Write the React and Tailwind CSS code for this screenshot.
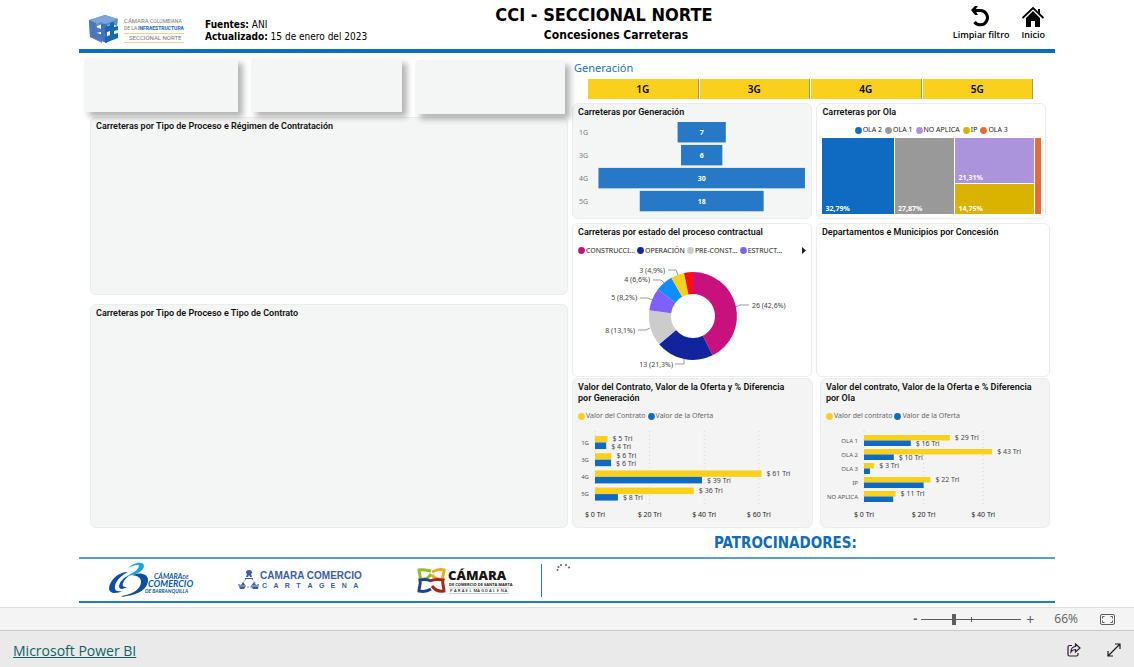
import React, { useState } from 'react';

const funnel = [
  { label: '1G', value: 7 },
  { label: '3G', value: 6 },
  { label: '4G', value: 30 },
  { label: '5G', value: 18 },
];

const states = [
  { value: 26, color: '#c9117d', label: '26 (42,6%)', x: 179, y: 64, anchor: 'start', line: '163,62 167,60 176,60' },
  { value: 13, color: '#12239e', label: '13 (21,3%)', x: 100, y: 123, anchor: 'end', line: '111,114 111,119 102,119' },
  { value: 8, color: '#cccccc', label: '8 (13,1%)', x: 62, y: 89, anchor: 'end', line: '77,83 73,85 65,85' },
  { value: 5, color: '#8061f8', label: '5 (8,2%)', x: 64, y: 56, anchor: 'end', line: '79,55 75,53 67,53' },
  { value: 4, color: '#118dff', label: '4 (6,6%)', x: 77, y: 38, anchor: 'end', line: '91,38 88,35 80,35' },
  { value: 3, color: '#f9d11c', label: '3 (4,9%)', x: 92, y: 29, anchor: 'end', line: '105,30 103,25 95,25' },
  { value: 2, color: '#ff0f14' },
];

const byGeneration = [
  { label: '1G', contrato: 4.6, oferta: 4.1, text: ['$ 5 Tri', '$ 4 Tri'] },
  { label: '3G', contrato: 6, oferta: 5.9, text: ['$ 6 Tri', '$ 6 Tri'] },
  { label: '4G', contrato: 61, oferta: 39.2, text: ['$ 61 Tri', '$ 39 Tri'] },
  { label: '5G', contrato: 36.2, oferta: 8.4, text: ['$ 36 Tri', '$ 8 Tri'] },
];

const byOla = [
  { label: 'OLA 1', contrato: 28.8, oferta: 15.7, text: ['$ 29 Tri', '$ 16 Tri'] },
  { label: 'OLA 2', contrato: 43, oferta: 10, text: ['$ 43 Tri', '$ 10 Tri'] },
  { label: 'OLA 3', contrato: 3.4, oferta: 2, text: ['$ 3 Tri', ''] },
  { label: 'IP', contrato: 22.3, oferta: 20, text: ['$ 22 Tri', ''] },
  { label: 'NO APLICA', contrato: 10.6, oferta: 9.8, text: ['$ 11 Tri', ''] },
];

function Card({ title, className = '', children }) {
  return (
    <section className={`min-w-0 overflow-hidden rounded-md border border-[#ebedec] ${className}`}>
      <h2 className="-mb-px pt-[3px] pr-4 pl-[5px] font-['Roboto','Noto_Sans',sans-serif] text-[9px] leading-[11px] font-semibold text-[#111]">{title}</h2>
      {children}
    </section>
  );
}

function Legend({ items, className = '' }) {
  return (
    <ul className={`flex items-center text-[7px] leading-[10px] whitespace-nowrap ${className}`}>
      {items.map(([color, text]) => (
        <li key={text} className="flex items-center gap-px">
          <svg className="size-[7px] shrink-0" viewBox="0 0 7 7"><circle cx="3.5" cy="3.5" r="3.4" fill={color} /></svg>
          {text}
        </li>
      ))}
    </ul>
  );
}

function FunnelChart() {
  return (
    <svg className="block h-[96px] w-full" viewBox="0 0 239 96" preserveAspectRatio="xMinYMin" fontSize="7">
      {funnel.map((d, i) => {
        const width = d.value * 6.9;
        const y = 5 + i * 23;
        return (
          <g key={d.label}>
            <text x="6" y={y + 13} fill="#777">{d.label}</text>
            <rect x={129 - width / 2} y={y} width={width} height="20.5" fill="#2779c7" />
            <text x="129" y={y + 13} fill="#fff" fontWeight="700" textAnchor="middle">{d.value}</text>
          </g>
        );
      })}
    </svg>
  );
}

function Treemap() {
  return (
    <div className="mr-1 ml-[5px] mt-[3px] grid h-[76px] grid-cols-[71fr_59fr_78fr_6fr] grid-rows-[44fr_30fr] gap-px text-[7px] leading-[10px] font-bold text-white">
      <div className="row-span-2 flex items-end bg-[#0f6bc1] px-[3px]">32,79%</div>
      <div className="row-span-2 flex items-end bg-[#999999] px-[3px]">27,87%</div>
      <div className="flex items-end bg-[#ac94dc] px-[3px]">21,31%</div>
      <div className="col-start-4 row-span-2 row-start-1 bg-[#e66c37]" />
      <div className="col-start-3 row-start-2 flex items-end bg-[#d9b300] px-[3px]">14,75%</div>
    </div>
  );
}

function slicePath(from, to, cx, cy, outer, inner) {
  const point = (t, r) => `${cx + r * Math.sin(t * 2 * Math.PI)} ${cy - r * Math.cos(t * 2 * Math.PI)}`;
  return `M${point(from, outer)} A${outer} ${outer} 0 0 1 ${point(to, outer)} L${point(to, inner)} A${inner} ${inner} 0 0 0 ${point(from, inner)}Z`;
}

function DonutChart() {
  const total = states.reduce((sum, s) => sum + s.value, 0);
  let start = 0;
  return (
    <svg className="block h-[116px] w-full" viewBox="0 11 238 116" preserveAspectRatio="xMinYMin" fontSize="7">
      {states.map((s) => {
        const from = start;
        start += s.value / total;
        return (
          <g key={s.color}>
            <path d={slicePath(from, start, 120, 71, 44, 22)} fill={s.color} />
            {s.label && <polyline points={s.line} fill="none" stroke="#999" />}
            {s.label && <text x={s.x} y={s.y - 1} textAnchor={s.anchor} fill="#444">{s.label}</text>}
          </g>
        );
      })}
    </svg>
  );
}

function BarChart({ data, x0, scale, top, pitch, bar, ticks }) {
  return (
    <svg className="block h-[104px] w-full" viewBox="0 0 227 104" preserveAspectRatio="xMinYMin" fontSize="7">
      {ticks.map((t) => (
        <g key={t}>
          <line x1={x0 + t * scale} x2={x0 + t * scale} y1="10" y2="86" stroke="#d4d4d4" strokeDasharray="1 3" />
          <text x={x0 + t * scale} y="96" textAnchor="middle" fill="#222">{`$ ${t} Tri`}</text>
        </g>
      ))}
      {data.map((d, i) => {
        const y = top + i * pitch;
        return (
          <g key={d.label} fill="#444">
            <text x={x0 - 6} y={y + bar + 2} fontSize="6" textAnchor="end" fill="#555">{d.label}</text>
            <rect x={x0} y={y} width={d.contrato * scale} height={bar} fill="#f9d11c" />
            <rect x={x0} y={y + bar} width={d.oferta * scale} height={bar} fill="#0f6bc1" />
            <text x={x0 + d.contrato * scale + 5} y={y + bar / 2 + 2}>{d.text[0]}</text>
            {d.text[1] && <text x={x0 + d.oferta * scale + 5} y={y + bar * 1.5 + 3}>{d.text[1]}</text>}
          </g>
        );
      })}
    </svg>
  );
}

function CciLogo() {
  return (
    <div className="flex items-center gap-1">
      <svg className="h-7 w-[30px]" viewBox="0 0 30 28">
        <path d="M0 5 16 0l13 4-1 7-6-2-4 2-5-2-5 2v7l5 2v8L1 22z" fill="#5b8bc9" />
        <path d="M0 5 16 0l13 4-13 5-4-2-5 2z" fill="#7ea5d8" />
        <path d="M0 5l7 3v4l5 2v3l-5 1 8 2v7L1 22z" fill="#4a78bb" />
        <path d="M12 9h6v19l-3-1-3-6z" fill="#3f73ba" />
        <path d="M16 12l5-2V8l4-1v5l4-1v4l-4 1v3l4-1v5l-13 5v-6l5-2v-4l-5 2z" fill="#1769ae" />
      </svg>
      <svg className="h-[27px] w-[62px]" viewBox="0 0 62 27" fontFamily="Roboto, sans-serif" fontSize="5" fill="#777">
        <text x="1" y="7" fontSize="6">CÁMARA</text>
        <text x="27" y="7">COLOMBIANA</text>
        <text x="1" y="14">DE LA</text>
        <text x="15" y="14" fill="#1769ae" fontWeight="700">INFRAESTRUCTURA</text>
        <text x="6" y="24" fontSize="6">SECCIONAL NORTE</text>
        <path d="M1 17.5h60M1 26.5h60" stroke="#f3cf94" />
      </svg>
    </div>
  );
}

function BarranquillaLogo() {
  return (
    <svg className="h-9 w-[90px]" viewBox="0 0 90 36" fontFamily="Lato, sans-serif" fontStyle="italic" fontWeight="700">
      <path d="M20 10C10 10 2 18 1 26c0 6 7 6 14 3-5 1-9 0-8-5 1-6 7-11 13-14z" fill="#0b4ea2" />
      <path d="M22 13c-6 2-11 7-11 12 1 3 5 2 8 0-4 0-5-1-4-4 1-3 4-6 7-8z" fill="#0b4ea2" />
      <path d="M24 13c7-3 16-2 16 5 0 9-10 15-22 16-1 1-4 1-5 0 9-1 20-6 20-14 0-5-4-6-9-7z" fill="#0b4ea2" />
      <path d="M20 6c5-5 15-8 16-2 0 5-8 9-17 10 6-3 11-6 12-10 0-2-5-1-11 2z" fill="#16a5df" />
      <g fill="#0b55a5">
        <text x="46" y="17" fontSize="7">CÁMARA<tspan fontSize="5">DE</tspan></text>
        <text x="40" y="25" fontSize="9">COMERCIO</text>
        <text x="37" y="31" fontSize="5">DE BARRANQUILLA</text>
      </g>
    </svg>
  );
}

function CartagenaLogo() {
  return (
    <svg className="h-5 w-[128px]" viewBox="0 0 128 20" fill="#3d5da3" fontFamily="Liberation Sans, sans-serif">
      <path d="M11 0c2 0 3 1 3 3l-1 1 1 3h-2l-1-2-1 2H8l1-3-1-1c0-2 1-3 3-3zM7 8h8v1H7z" />
      <path d="M8 9 4 14M14 9l4 5M9 17h5" stroke="#3d5da3" strokeWidth="0.7" strokeDasharray="2 1" />
      <path d="M0 14l3 1 2-3 3 4-2 3H2zM21 14l-3 1-2-3-3 4 2 3h5z" />
      <path d="M1 16h7M14 16h7" stroke="#fff" strokeWidth="0.6" />
      <text x="22" y="9" fontSize="10" fontWeight="700">CÁMARA COMERCIO</text>
      {'CARTAGENA'.split('').map((letter, i) => (
        <text key={i} x={24 + i * 11.4} y="18" fontSize="7" fontWeight="700">{letter}</text>
      ))}
    </svg>
  );
}

function SantaMartaLogo() {
  return (
    <svg className="h-7 w-[98px]" viewBox="0 0 98 28" fontFamily="Open Sans, sans-serif" fontWeight="800" fill="#161616">
      <g fill="none" strokeWidth="3">
        <path d="M14 5C9 4 6 3 2 4c0 4 2 6 1 9 5 1 8 0 11-5" stroke="#8fbf21" />
        <path d="M15 6c4-2 8-3 12-2 0 4-2 6-1 9-4 1-8 0-11-4" stroke="#f4a81c" />
        <path d="M14 15c-4-2-7-2-11-1 1 4-1 7-1 11 5 1 9 0 12-2" stroke="#27408b" />
        <path d="M13 15c4-2 8-2 13-1-1 4 1 7 1 11-5 1-9-1-12-5" stroke="#9e2b20" />
      </g>
      <text x="31" y="14" fontSize="13">CÁMARA</text>
      <text x="32" y="20" fontSize="4" fontWeight="700">DE COMERCIO DE SANTA MARTA</text>
      <path d="M32 22h60M32 27.500h60" stroke="#999" strokeWidth="0.5" />
      {'PARAELMAGDALENA'.split('').map((letter, i) => (
        <text key={i} x={33 + i * 3.9} y="26" fontSize="4" fontWeight="600">{letter}</text>
      ))}
    </svg>
  );
}

export default function App() {
  const [zoom, setZoom] = useState(66);

  return (
    <div className="bg-white font-['Noto_Sans','Open_Sans',sans-serif] text-[#252423]">
      <main className="px-[79px]">
        <header className="flex h-[53px] items-start border-b-4 border-[#0a6ebd] font-['DejaVu_Sans_Condensed','DejaVu_Sans',sans-serif] text-black">
          <div className="pt-[15px] pl-[10px]"><CciLogo /></div>
          <p className="ml-5 pt-[19px] text-[10px] leading-[12px]">
            <b>Fuentes:</b> ANI<br />
            <b>Actualizado:</b> 15 de enero del 2023
          </p>
          <div className="flex-1 pt-1 pr-[112px] text-center font-bold">
            <h1 className="text-[18px] leading-[22px]">CCI - SECCIONAL NORTE</h1>
            <p className="pl-6 text-[12px] leading-[18px]">Concesiones Carreteras</p>
          </div>
          <div className="flex gap-3 pt-[6px] pr-[10px] font-['Open_Sans',sans-serif] text-[9px] leading-[12px] font-semibold">
            <button className="flex flex-col items-center gap-[1px]">
              <svg className="size-[22px]" viewBox="0 0 22 22">
                <path d="M3 4.500h8a7.200 7.200 0 1 1-6.500 11.500" fill="none" stroke="#000" strokeWidth="3" />
                <path d="M1 4 5 0h3L5 4l3 5H5z" />
              </svg>
              Limpiar filtro
            </button>
            <button className="flex flex-col items-center gap-[1px]">
              <svg className="size-[22px]" viewBox="0 0 22 22">
                <path d="M0.500 12 11 2l10.500 10" fill="none" stroke="#000" strokeWidth="1.800" />
                <path d="M4 12l7-7 7 7v9h-5v-6H9v6H4zM16 3h2v5l-2-2z" />
              </svg>
              Inicio
            </button>
          </div>
        </header>

        <div className="grid grid-cols-[493fr_483fr]">
          <div className="flex flex-col pr-1">
            <div className="z-10 flex h-[64px] gap-[13px] pt-[5px] pr-[3px] pl-[5px]">
              <div className="h-[54px] flex-[154] rounded-tl bg-[#f4f6f5] shadow-[5px_5px_6px_rgba(0,0,0,0.3)]" />
              <div className="h-[54px] flex-[150] rounded-tl bg-[#f4f6f5] shadow-[5px_5px_6px_rgba(0,0,0,0.3)]" />
              <div className="mt-[2px] h-[54px] flex-[150] rounded-tl bg-[#f4f6f5] shadow-[5px_5px_6px_rgba(0,0,0,0.3)]" />
            </div>
            <Card title="Carreteras por Tipo de Proceso e Régimen de Contratación" className="ml-[11px] h-[178px] bg-[#f4f6f5]" />
            <Card title="Carreteras por Tipo de Proceso e Tipo de Contrato" className="mt-[9px] ml-[11px] flex-1 bg-[#f4f6f5]" />
          </div>

          <div className="flex flex-col pr-[5px]">
            <div className="h-[50px] pt-[7px] pr-[17px] pl-[2px]">
              <h2 className="text-[11px] leading-[16px] text-[#2275c4]">Generación</h2>
              <div className="mt-[3px] ml-[14px] flex gap-px">
                {['1G', '3G', '4G', '5G'].map((g) => (
                  <button key={g} className="h-5 flex-1 border-r border-[#a39b6e] bg-[#f9d11c] text-[10px] font-semibold text-black">{g}</button>
                ))}
              </div>
            </div>

            <div className="flex h-[116px] gap-1">
              <Card title="Carreteras por Generación" className="flex-[241] bg-[#f4f6f5]"><FunnelChart /></Card>
              <Card title="Carreteras por Ola" className="mr-1 flex-[230] bg-white">
                <Legend
                  className="mt-2 justify-center gap-[3px]"
                  items={[['#0f6bc1', 'OLA 2'], ['#999999', 'OLA 1'], ['#ac94dc', 'NO APLICA'], ['#d9b300', 'IP'], ['#e66c37', 'OLA 3']]}
                />
                <Treemap />
              </Card>
            </div>

            <div className="mt-1 flex h-[154px] gap-1">
              <Card title="Carreteras por estado del proceso contractual" className="flex-[240] bg-white">
                <div className="mt-2 flex h-[11px] items-center justify-between pr-[5px] pl-[5px]">
                  <Legend
                    className="gap-[2px]"
                    items={[['#c9117d', 'CONSTRUCCI...'], ['#12239e', 'OPERACIÓN'], ['#cccccc', 'PRE-CONST...'], ['#8061f8', 'ESTRUCT...']]}
                  />
                  <button aria-label="Siguiente"><svg className="h-[7px] w-1" viewBox="0 0 4 7"><path d="M0 0l4 3.5L0 7z" fill="#222" /></svg></button>
                </div>
                <DonutChart />
              </Card>
              <Card title="Departamentos e Municipios por Concesión" className="flex-[234] bg-white" />
            </div>

            <div className="mt-px flex h-[150px] gap-[7px]">
              <Card title="Valor del Contrato, Valor de la Oferta y % Diferencia por Generación" className="flex-[241] bg-[#f4f4f4]">
                <Legend className="mt-2 gap-[2px] pl-[5px] text-[#666]" items={[['#f9d11c', 'Valor del Contrato'], ['#0f6bc1', 'Valor de la Oferta']]} />
                <BarChart data={byGeneration} x0={22} scale={2.73} top={15} pitch={17.2} bar={6.5} ticks={[0, 20, 40, 60]} />
              </Card>
              <Card title="Valor del contrato, Valor de la Oferta e % Diferencia por Ola" className="flex-[230] bg-[#f4f4f4]">
                <Legend className="mt-2 gap-[2px] pl-[5px] text-[#666]" items={[['#f9d11c', 'Valor del contrato'], ['#0f6bc1', 'Valor de la Oferta']]} />
                <BarChart data={byOla} x0={43} scale={2.98} top={14} pitch={14} bar={5.5} ticks={[0, 20, 40]} />
              </Card>
            </div>
          </div>
        </div>

        <h2 className="pt-[6px] pl-[635px] font-['DejaVu_Sans_Condensed','DejaVu_Sans',sans-serif] text-[15px] leading-[18px] font-bold whitespace-nowrap text-[#0f6cb6]">PATROCINADORES:</h2>
        <div className="mt-[5px] flex h-[46px] items-center border-t-2 border-b-2 border-t-[#5b9bd5] border-b-[#1f7bc9] pl-[29px]">
          <BarranquillaLogo />
          <div className="ml-10"><CartagenaLogo /></div>
          <div className="ml-[51px]"><SantaMartaLogo /></div>
          <div className="ml-[26px] h-[33px] w-px bg-[#1f7bc9]" />
          <svg className="mt-1 ml-[14px] h-2 w-[15px] self-start" viewBox="0 0 15 8" fill="#666">
            <circle cx="1.5" cy="7" r="1" /><circle cx="2.5" cy="4" r="1.1" /><circle cx="5" cy="2" r="1.1" />
            <circle cx="10" cy="2" r="1.1" /><circle cx="13" cy="4.5" r="1.1" />
          </svg>
        </div>
      </main>

      <div className="mt-1 flex h-6 items-center justify-end border-t border-b border-t-[#e0e0e0] border-b-[#c8c8c8] bg-[#f4f4f4] pr-[19px] text-[#605e5c]">
        <button aria-label="Alejar" className="mr-1 text-[13px] font-bold" onClick={() => setZoom(Math.max(10, zoom - 10))}>-</button>
        <div className="relative flex items-center">
          <input
            type="range"
            aria-label="Zoom"
            min="0"
            max="206"
            value={zoom}
            onChange={(e) => setZoom(Number(e.target.value))}
            className="h-[11px] w-[100px] appearance-none bg-transparent bg-[linear-gradient(#605e5c,#605e5c)] bg-size-[100%_1px] bg-center bg-no-repeat [&::-webkit-slider-thumb]:h-[11px] [&::-webkit-slider-thumb]:w-1 [&::-webkit-slider-thumb]:appearance-none [&::-webkit-slider-thumb]:bg-[#605e5c]"
          />
          <span className="pointer-events-none absolute left-1/2 h-[5px] w-px bg-[#605e5c]" />
        </div>
        <button aria-label="Acercar" className="ml-[5px] text-[14px]" onClick={() => setZoom(Math.min(206, zoom + 10))}>+</button>
        <button className="ml-5 font-['Open_Sans',sans-serif] text-[12px]">{zoom}%</button>
        <button aria-label="Ajustar a la página" className="ml-[22px]">
          <svg className="block h-[11px] w-[15px]" viewBox="0 0 15 11" fill="none" stroke="#605e5c">
            <rect x="0.5" y="0.5" width="14" height="10" rx="1.5" />
            <path d="M2.5 4.500V2.500h2M10.500 2.500h2v2M12.500 6.500v2h-2M4.500 8.500h-2v-2" />
          </svg>
        </button>
      </div>

      <footer className="flex h-9 items-center justify-between bg-[#eaeaea] pt-[2px] pr-[13px] pl-[13px]">
        <a href="#" className="font-['Open_Sans',sans-serif] text-[14px] text-[#0f6264] underline">Microsoft Power BI</a>
        <div className="flex items-center gap-[26px]">
          <button aria-label="Compartir">
            <svg className="block size-[14px]" viewBox="0 0 14 14" fill="none" stroke="#2b1b33" strokeWidth="1.2">
              <path d="M5 2.500H2.500a1.500 1.500 0 0 0-1.500 1.500v7.500A1.500 1.500 0 0 0 2.500 13h7a1.500 1.500 0 0 0 1.500-1.500V10" />
              <path d="M8.500 1l4.500 4-4.500 4V6.500C6 6.500 5 7.500 4 9c0-3 1.500-5.300 4.500-5.500z" />
            </svg>
          </button>
          <button aria-label="Pantalla completa">
            <svg className="block size-[14px]" viewBox="0 0 14 14" fill="none" stroke="#1a1a1a" strokeWidth="1.2">
              <path d="M8 1h5v5M13 1 1 13M1 8v5h5" />
            </svg>
          </button>
        </div>
      </footer>
    </div>
  );
}
